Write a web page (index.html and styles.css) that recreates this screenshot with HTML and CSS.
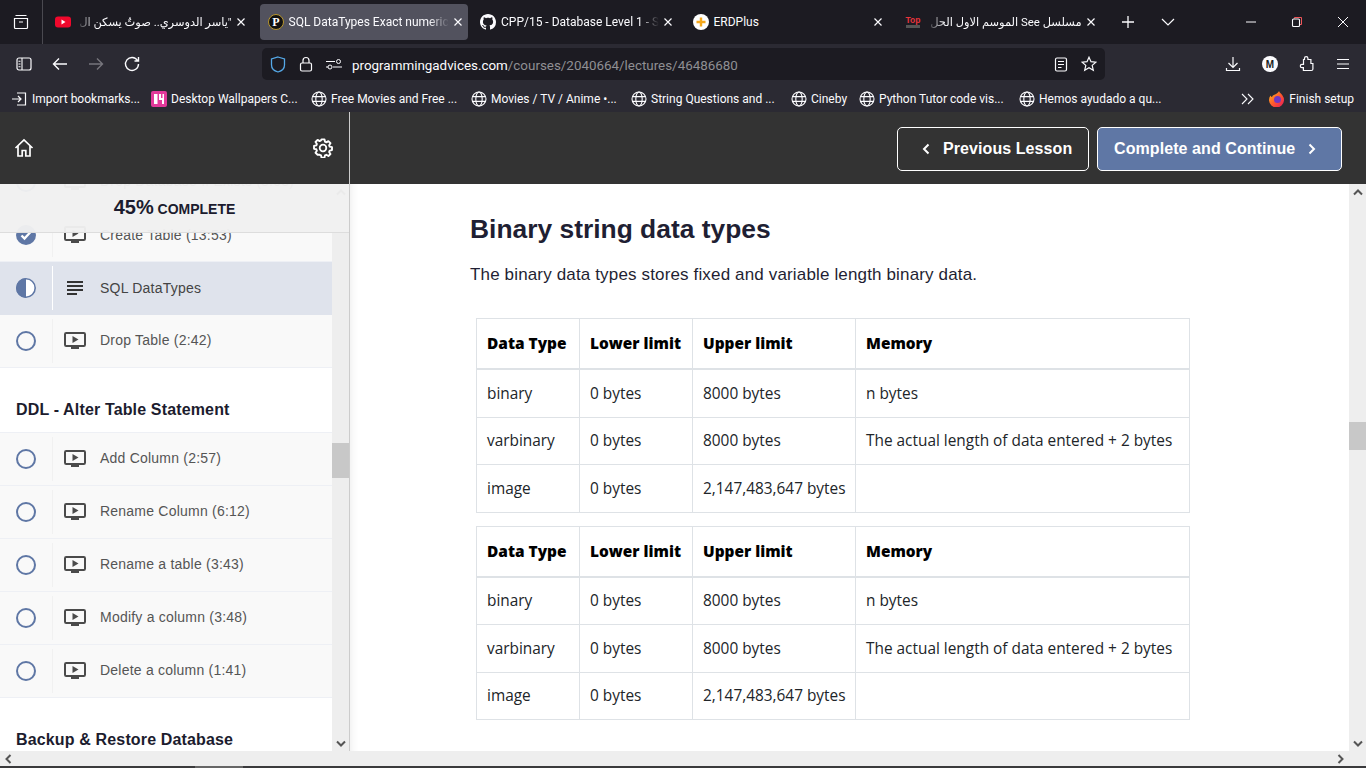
FILE: index.html
```html
<!DOCTYPE html>
<html lang="en">

<head>
    <meta charset="UTF-8">
    <title>SQL DataTypes</title>
    <link rel="stylesheet" href="styles.css">
</head>

<body>
    <svg class="defs" width="0" height="0">
        <symbol id="globe" viewBox="0 0 16 16">
            <g fill="none" stroke="#fbfbfe" stroke-width="1.1">
                <circle cx="8" cy="8" r="7"/>
                <ellipse cx="8" cy="8" rx="3.2" ry="7"/>
                <path d="M1.4 5.6h13.2M1.4 10.4h13.2"/>
            </g>
        </symbol>
        <symbol id="close" viewBox="0 0 10 10">
            <path d="M1.5 1.5l7 7M8.5 1.5l-7 7" fill="none" stroke="#fbfbfe" stroke-width="1.2"/>
        </symbol>
        <symbol id="screen" viewBox="0 0 22 18">
            <rect x="1" y="1" width="20" height="13" rx="1.2" fill="none" stroke="#4b4b4b" stroke-width="2"/>
            <path d="M8.5 4l6 3.5-6 3.5z" fill="#4b4b4b"/>
            <rect x="7" y="15" width="8" height="2" fill="#4b4b4b"/>
        </symbol>
        <symbol id="chev" viewBox="0 0 12 8">
            <path d="M2 6.5l4-4 4 4" fill="none" stroke="#555" stroke-width="2"/>
        </symbol>
    </svg>

    <!--tab bar-->
    <header class="tabbar">
        <div class="tab-view">
            <svg width="16" height="16" viewBox="0 0 16 16">
                <path d="M2.5 1.500h11M1.500 4.500h13v9a1 1 0 0 1-1 1h-11a1 1 0 0 1-1-1zM6 8h4" fill="none" stroke="#fbfbfe" stroke-width="1.2"/>
            </svg>
        </div>
        <div class="tab">
            <svg class="fav" width="16" height="16" viewBox="0 0 16 16">
                <rect y="2.500" width="16" height="11" rx="3" fill="#f0082c"/>
                <path d="M6.500 5.500l4 2.500-4 2.500z" fill="#fff"/>
            </svg>
            <span class="tab-title tab-title-rtl" dir="rtl">"ياسر الدوسري.. صوتٌ يسكن ال</span>
            <svg class="tab-close"><use href="#close"/></svg>
        </div>
        <div class="tab tab-active">
            <svg class="fav" width="16" height="16" viewBox="0 0 16 16">
                <circle cx="8" cy="8" r="7.500" fill="#111" stroke="#b8962e"/>
                <text x="8" y="12" text-anchor="middle" class="fav-letter">P</text>
            </svg>
            <span class="tab-title">SQL DataTypes Exact numeric</span>
            <svg class="tab-close"><use href="#close"/></svg>
        </div>
        <div class="tab">
            <svg class="fav" width="16" height="16" viewBox="0 0 16 16">
                <path fill="#fbfbfe" d="M8 0C3.580 0 0 3.580 0 8c0 3.540 2.290 6.530 5.470 7.590.4.070.55-.170.55-.380 0-.190-.010-.820-.010-1.490-2.010.370-2.530-.490-2.690-.940-.090-.230-.480-.940-.820-1.130-.280-.150-.680-.520-.010-.530.630-.010 1.080.580 1.230.820.720 1.210 1.870.870 2.330.660.070-.520.280-.870.510-1.070-1.780-.200-3.640-.890-3.640-3.950 0-.870.310-1.590.820-2.150-.080-.200-.360-1.020.080-2.120 0 0 .670-.210 2.200.820.640-.180 1.320-.270 2-.270s1.360.090 2 .270c1.530-1.040 2.200-.820 2.200-.820.440 1.100.160 1.920.080 2.120.510.560.820 1.270.820 2.150 0 3.070-1.870 3.750-3.650 3.950.290.250.540.730.540 1.480 0 1.070-.010 1.930-.010 2.200 0 .210.150.460.550.380A8.010 8.010 0 0 0 16 8c0-4.420-3.580-8-8-8z"/>
            </svg>
            <span class="tab-title">CPP/15 - Database Level 1 - S</span>
            <svg class="tab-close"><use href="#close"/></svg>
        </div>
        <div class="tab">
            <svg class="fav" width="16" height="16" viewBox="0 0 16 16">
                <circle cx="8" cy="8" r="8" fill="#fff"/>
                <path d="M8 3.500v9M3.500 8h9" stroke="#f5a81c" stroke-width="2.400"/>
            </svg>
            <span class="tab-title">ERDPlus</span>
            <svg class="tab-close"><use href="#close"/></svg>
        </div>
        <div class="tab">
            <svg class="fav" width="16" height="16" viewBox="0 0 16 16">
                <text x="8" y="9" text-anchor="middle" class="fav-top">Top</text>
                <rect x="1" y="11" width="14" height="3" fill="#555"/>
            </svg>
            <span class="tab-title tab-title-rtl" dir="rtl">مسلسل See الموسم الاول الحل</span>
            <svg class="tab-close"><use href="#close"/></svg>
        </div>
        <div class="tab-new">
            <svg width="14" height="14" viewBox="0 0 14 14"><path d="M7 1v12M1 7h12" stroke="#fbfbfe" stroke-width="1.300"/></svg>
        </div>
        <div class="tab-list">
            <svg width="14" height="8" viewBox="0 0 14 8"><path d="M1 1l6 6 6-6" fill="none" stroke="#fbfbfe" stroke-width="1.200"/></svg>
        </div>
        <div class="win-btns">
            <svg width="12" height="12" viewBox="0 0 12 12"><path d="M1 6h10" stroke="#fbfbfe" stroke-width="1"/></svg>
            <svg width="12" height="12" viewBox="0 0 12 12">
                <path d="M3.500 2.500v-1h7v7h-1.500" fill="none" stroke="#f0565a" stroke-width="1"/>
                <rect x="1.500" y="3" width="7" height="7.500" rx="1" fill="none" stroke="#fbfbfe" stroke-width="1.100"/>
            </svg>
            <svg width="12" height="12" viewBox="0 0 12 12"><path d="M1 1l10 10M11 1L1 11" stroke="#fbfbfe" stroke-width="1"/></svg>
        </div>
    </header>

    <!--address bar-->
    <div class="toolbar">
        <div class="nav-btns">
            <svg width="16" height="14" viewBox="0 0 16 14">
                <rect x="1" y="1" width="14" height="12" rx="2" fill="none" stroke="#fbfbfe" stroke-width="1.200"/>
                <path d="M6 1v12M2.500 4.200h2M2.500 7h2M2.500 9.800h2" stroke="#fbfbfe" stroke-width="1.100"/>
            </svg>
            <svg width="16" height="14" viewBox="0 0 16 14"><path d="M15 7H2M7 1.500L1.500 7 7 12.500" fill="none" stroke="#fbfbfe" stroke-width="1.400"/></svg>
            <svg width="16" height="14" viewBox="0 0 16 14"><path d="M1 7h13M9 1.500L14.500 7 9 12.500" fill="none" stroke="#77767d" stroke-width="1.400"/></svg>
            <svg width="16" height="16" viewBox="0 0 16 16"><path d="M13.500 4.500A6.500 6.500 0 1 0 14.500 8M14.500 1v4h-4" fill="none" stroke="#fbfbfe" stroke-width="1.400"/></svg>
        </div>
        <div class="urlbar">
            <svg class="url-shield" width="16" height="17" viewBox="0 0 16 17">
                <path d="M8 1l6.500 2v6c0 3.500-3 6-6.500 7-3.500-1-6.500-3.500-6.500-7V3z" fill="none" stroke="#55a9e8" stroke-width="1.300"/>
            </svg>
            <svg class="url-lock" width="14" height="16" viewBox="0 0 14 16">
                <rect x="1.500" y="7" width="11" height="8" rx="1.500" fill="none" stroke="#fbfbfe" stroke-width="1.200"/>
                <path d="M4 7V4.500a3 3 0 0 1 6 0V7" fill="none" stroke="#fbfbfe" stroke-width="1.200"/>
            </svg>
            <svg class="url-perm" width="16" height="12" viewBox="0 0 16 12">
                <path d="M0 3.500h9M0 9h2M7 9h9" stroke="#fbfbfe" stroke-width="1"/>
                <circle cx="12.500" cy="3.500" r="2" fill="none" stroke="#fbfbfe"/>
                <circle cx="4" cy="9" r="2" fill="none" stroke="#fbfbfe"/>
            </svg>
            <span class="url-text">programmingadvices.com<span class="url-path">/courses/2040664/lectures/46486680</span></span>
            <svg width="14" height="15" viewBox="0 0 14 15">
                <rect x="1.500" y="1" width="11" height="13" rx="1.500" fill="none" stroke="#fbfbfe" stroke-width="1.200"/>
                <path d="M4 4.500h6M4 7.500h6M4 10.500h3.500" stroke="#fbfbfe" stroke-width="1.100"/>
            </svg>
            <svg class="url-star" width="16" height="16" viewBox="0 0 16 16">
                <path d="M8 1.200l2 4.500 4.900.5-3.700 3.200 1.100 4.800L8 11.700l-4.300 2.500 1.100-4.800L1.100 6.200 6 5.700z" fill="none" stroke="#fbfbfe" stroke-width="1.200"/>
            </svg>
        </div>
        <div class="tool-btns">
            <svg width="16" height="16" viewBox="0 0 16 16"><path d="M8 1v10M3.500 7L8 11.500 12.500 7M1.500 12v2.500h13V12" fill="none" stroke="#fbfbfe" stroke-width="1.200"/></svg>
            <svg width="16" height="16" viewBox="0 0 16 16">
                <circle cx="8" cy="8" r="8" fill="#fbfbfe"/>
                <text x="8" y="11.500" text-anchor="middle" class="avatar-letter">M</text>
            </svg>
            <svg width="16" height="16" viewBox="0 0 16 16">
                <path d="M5.500 3.500V2.300a1.700 1.700 0 0 1 3.400 0v1.200h3v4h2v5.500a1.500 1.500 0 0 1-1.500 1.500h-8v-2.800H3a1.700 1.700 0 0 1 0-3.400h1.500V3.500z" fill="none" stroke="#fbfbfe" stroke-width="1.200"/>
            </svg>
            <svg width="14" height="12" viewBox="0 0 14 12"><path d="M1 1.500h12M1 6h12M1 10.500h12" stroke="#fbfbfe" stroke-width="1.200"/></svg>
        </div>
    </div>

    <!--bookmarks-->
    <nav class="bookmarks">
        <div class="bm bm-import">
            <svg width="15" height="14" viewBox="0 0 15 14">
                <path d="M5 1h8.500v12H5M0 7h9M6 4l3 3-3 3" fill="none" stroke="#fbfbfe" stroke-width="1.200"/>
            </svg>
            <span>Import bookmarks...</span>
        </div>
        <div class="bm bm-wall">
            <svg width="16" height="16" viewBox="0 0 16 16">
                <rect width="16" height="16" rx="2" fill="#e2399a"/>
                <path d="M3 3h3.500v10H3zM8 3h2v4h1.500V3H13v10h-2V9H8z" fill="#fff"/>
            </svg>
            <span>Desktop Wallpapers C...</span>
        </div>
        <div class="bm"><svg class="bm-globe"><use href="#globe"/></svg><span>Free Movies and Free ...</span></div>
        <div class="bm"><svg class="bm-globe"><use href="#globe"/></svg><span>Movies / TV / Anime •...</span></div>
        <div class="bm"><svg class="bm-globe"><use href="#globe"/></svg><span>String Questions and ...</span></div>
        <div class="bm bm-short"><svg class="bm-globe"><use href="#globe"/></svg><span>Cineby</span></div>
        <div class="bm"><svg class="bm-globe"><use href="#globe"/></svg><span>Python Tutor code vis...</span></div>
        <div class="bm"><svg class="bm-globe"><use href="#globe"/></svg><span>Hemos ayudado a qu...</span></div>
        <svg class="bm-more" width="13" height="12" viewBox="0 0 13 12"><path d="M1 1l5 5-5 5M7 1l5 5-5 5" fill="none" stroke="#fbfbfe" stroke-width="1.100"/></svg>
        <div class="bm bm-setup">
            <svg width="16" height="16" viewBox="0 0 16 16">
                <defs>
                    <linearGradient id="fox" x1="0" y1="0" x2="1" y2="1">
                        <stop offset="0" stop-color="#ffc21a"/>
                        <stop offset=".5" stop-color="#ff5a2c"/>
                        <stop offset="1" stop-color="#e6175c"/>
                    </linearGradient>
                </defs>
                <path d="M10 0c.5 2 2.500 2.500 3.500 4.500A7.500 7.500 0 1 1 1.500 4.500C2 5.500 2.500 6 3 6c.5-2 3-2.500 4-3 1-.7 2.500-1.500 3-3z" fill="url(#fox)"/>
                <circle cx="8.500" cy="8.500" r="3.500" fill="#6f37c4"/>
            </svg>
            <span>Finish setup</span>
        </div>
    </nav>

    <!--course top bar-->
    <div class="course-head">
        <div class="head-left">
            <svg width="20" height="20" viewBox="0 0 20 20">
                <path d="M1.500 10L10 2l8.500 8M4 8v10h4.200v-5.500h3.600V18H16V8" fill="none" stroke="#fff" stroke-width="1.700"/>
            </svg>
            <svg width="20" height="20" viewBox="0 0 20 20">
                <path d="M8.300 1h3.400l.5 2.600 1.500.7 2.300-1.400 2.300 2.400-1.500 2.200.6 1.600 2.600.5v3.300l-2.600.5-.6 1.600 1.500 2.200-2.300 2.300-2.300-1.400-1.500.6-.5 2.600H8.300l-.5-2.600-1.500-.6L4 18.100l-2.300-2.300 1.500-2.200-.6-1.600L0 11.500V8.200l2.600-.5.6-1.600-1.500-2.200L4 1.500l2.300 1.400 1.500-.7z" transform="translate(1 .5) scale(.9)" fill="none" stroke="#fff" stroke-width="2.100" stroke-linejoin="round"/>
                <circle cx="10" cy="10" r="3.300" fill="none" stroke="#fff" stroke-width="1.800"/>
            </svg>
        </div>
        <div class="head-right">
            <a class="btn btn-prev">
                <svg width="8" height="12" viewBox="0 0 8 12"><path d="M6.500 1.500L2 6l4.500 4.500" fill="none" stroke="#fff" stroke-width="2"/></svg>
                Previous Lesson
            </a>
            <a class="btn btn-next">
                Complete and Continue
                <svg width="8" height="12" viewBox="0 0 8 12"><path d="M1.500 1.500L6 6l-4.500 4.500" fill="none" stroke="#fff" stroke-width="2"/></svg>
            </a>
        </div>
    </div>

    <div class="workspace">
        <!--sidebar-->
        <aside class="sidebar">
            <div class="curriculum">
                <ul class="lessons">
                    <li class="lesson">
                        <span class="status"><i class="dot"></i></span>
                        <svg class="lesson-ico"><use href="#screen"/></svg>
                        <span class="lesson-name">Drop Database If Exists (8:03)</span>
                    </li>
                    <li class="lesson lesson-done">
                        <span class="status">
                            <svg width="20" height="20" viewBox="0 0 20 20">
                                <circle cx="10" cy="10" r="10" fill="#5f77a5"/>
                                <path d="M5.500 10.500l3 3 6-6.500" fill="none" stroke="#fff" stroke-width="2.400"/>
                            </svg>
                        </span>
                        <svg class="lesson-ico"><use href="#screen"/></svg>
                        <span class="lesson-name">Create Table (13:53)</span>
                    </li>
                    <li class="lesson lesson-on">
                        <span class="status">
                            <svg width="20" height="20" viewBox="0 0 20 20">
                                <circle cx="10" cy="10" r="10" fill="#fff"/>
                                <path d="M10 0a10 10 0 0 0 0 20z" fill="#5f77a5"/>
                                <circle cx="10" cy="10" r="9.200" fill="none" stroke="#5f77a5" stroke-width="1.600"/>
                            </svg>
                        </span>
                        <svg class="lesson-ico" viewBox="0 0 22 18">
                            <path d="M3 3h16M3 7h16M3 11h16M3 15h10" stroke="#333" stroke-width="2"/>
                        </svg>
                        <span class="lesson-name">SQL DataTypes</span>
                    </li>
                    <li class="lesson">
                        <span class="status"><i class="dot"></i></span>
                        <svg class="lesson-ico"><use href="#screen"/></svg>
                        <span class="lesson-name">Drop Table (2:42)</span>
                    </li>
                </ul>
                <h3 class="section-title">DDL - Alter Table Statement</h3>
                <ul class="lessons">
                    <li class="lesson">
                        <span class="status"><i class="dot"></i></span>
                        <svg class="lesson-ico"><use href="#screen"/></svg>
                        <span class="lesson-name">Add Column (2:57)</span>
                    </li>
                    <li class="lesson">
                        <span class="status"><i class="dot"></i></span>
                        <svg class="lesson-ico"><use href="#screen"/></svg>
                        <span class="lesson-name">Rename Column (6:12)</span>
                    </li>
                    <li class="lesson">
                        <span class="status"><i class="dot"></i></span>
                        <svg class="lesson-ico"><use href="#screen"/></svg>
                        <span class="lesson-name">Rename a table (3:43)</span>
                    </li>
                    <li class="lesson">
                        <span class="status"><i class="dot"></i></span>
                        <svg class="lesson-ico"><use href="#screen"/></svg>
                        <span class="lesson-name">Modify a column (3:48)</span>
                    </li>
                    <li class="lesson">
                        <span class="status"><i class="dot"></i></span>
                        <svg class="lesson-ico"><use href="#screen"/></svg>
                        <span class="lesson-name">Delete a column (1:41)</span>
                    </li>
                </ul>
                <h3 class="section-title">Backup &amp; Restore Database</h3>
            </div>
            <div class="vscroll">
                <svg class="sb-arrow"><use href="#chev"/></svg>
                <div class="thumb thumb-side"></div>
                <svg class="sb-arrow sb-arrow-down"><use href="#chev"/></svg>
            </div>
            <div class="progress"><b>45%</b> COMPLETE</div>
        </aside>

        <!--lecture content-->
        <main class="lecture">
            <div class="lecture-body">
                <h2 class="lecture-title">Binary string data types</h2>
                <p class="lecture-text">The binary data types stores fixed and variable length binary data.</p>
                <table class="types">
                    <thead>
                        <tr><th class="c1">Data Type</th><th class="c2">Lower limit</th><th class="c3">Upper limit</th><th>Memory</th></tr>
                    </thead>
                    <tbody>
                        <tr><td>binary</td><td>0 bytes</td><td>8000 bytes</td><td>n bytes</td></tr>
                        <tr><td>varbinary</td><td>0 bytes</td><td>8000 bytes</td><td>The actual length of data entered + 2 bytes</td></tr>
                        <tr><td>image</td><td>0 bytes</td><td>2,147,483,647 bytes</td><td></td></tr>
                    </tbody>
                </table>
                <table class="types">
                    <thead>
                        <tr><th class="c1">Data Type</th><th class="c2">Lower limit</th><th class="c3">Upper limit</th><th>Memory</th></tr>
                    </thead>
                    <tbody>
                        <tr><td>binary</td><td>0 bytes</td><td>8000 bytes</td><td>n bytes</td></tr>
                        <tr><td>varbinary</td><td>0 bytes</td><td>8000 bytes</td><td>The actual length of data entered + 2 bytes</td></tr>
                        <tr><td>image</td><td>0 bytes</td><td>2,147,483,647 bytes</td><td></td></tr>
                    </tbody>
                </table>
            </div>
            <div class="vscroll">
                <svg class="sb-arrow"><use href="#chev"/></svg>
                <div class="thumb thumb-main"></div>
                <svg class="sb-arrow sb-arrow-down"><use href="#chev"/></svg>
            </div>
        </main>
    </div>

    <!--bottom scrollbar-->
    <div class="hscroll">
        <svg class="sb-arrow sb-arrow-left"><use href="#chev"/></svg>
        <svg class="sb-arrow sb-arrow-right"><use href="#chev"/></svg>
    </div>
    <div class="desk-edge"><i></i></div>
</body>

</html>
```

FILE: styles.css
```css
html,
body,
h2,
h3,
p,
ul {
    margin: 0;
    padding: 0;
}

body {
    display: flex;
    flex-direction: column;
    height: 768px;
    overflow: hidden;
    background: #fff;
    font-family: "Liberation Sans", Arial, sans-serif;
}

svg {
    display: block;
    flex: none;
}

.defs {
    position: absolute;
}

/*tab bar*/
.tabbar {
    display: flex;
    align-items: center;
    flex: none;
    height: 44px;
    background: #1c1b22;
    color: #fbfbfe;
    font: 12px Roboto, "DejaVu Sans", sans-serif;
}

.tab-view {
    display: flex;
    align-items: center;
    justify-content: center;
    width: 43px;
    height: 44px;
    box-sizing: border-box;
    border-right: 1px solid #4a4950;
}

.tab {
    display: flex;
    align-items: center;
    width: 208.500px;
    height: 36px;
    margin-right: 4px;
    padding: 0 10px 0 8px;
    box-sizing: border-box;
    border-radius: 4px;
}

.tab:nth-child(2) {
    margin-left: 4px;
}

.tab-active {
    background: #52525e;
}

.fav {
    margin-right: 5px;
}

.fav-letter {
    fill: #fff;
    font: bold 12px "Liberation Serif", serif;
}

.fav-top {
    fill: #e8343c;
    font: bold 8.500px "Liberation Sans", sans-serif;
}

.avatar-letter {
    fill: #1c1b22;
    font: bold 10px "Liberation Sans", sans-serif;
}

.tab-title {
    flex: 1;
    white-space: nowrap;
    -webkit-mask-image: linear-gradient(to left, transparent 0, #000 20px);
    mask-image: linear-gradient(to left, transparent 0, #000 20px);
}

.tab-title-rtl {
    font-size: 11.400px;
    -webkit-mask-image: linear-gradient(to right, transparent 0, #000 20px);
    mask-image: linear-gradient(to right, transparent 0, #000 20px);
}

/*ERDPlus is short, nothing to fade*/
.tab:nth-child(5) .tab-title {
    -webkit-mask-image: none;
    mask-image: none;
}

.tab-close {
    width: 10px;
    height: 10px;
    margin-left: 4px;
}

.tab-new {
    margin-left: 11px;
}

.tab-list {
    margin-left: 26px;
}

.win-btns {
    display: flex;
    gap: 34px;
    margin-left: auto;
    padding-right: 17px;
}

/*address bar*/
.toolbar {
    display: flex;
    align-items: center;
    flex: none;
    height: 40px;
    background: #2b2a33;
}

.nav-btns {
    display: flex;
    align-items: center;
    gap: 20px;
    width: 262px;
    padding-left: 16px;
    box-sizing: border-box;
}

.urlbar {
    display: flex;
    align-items: center;
    width: 843px;
    height: 32px;
    padding: 0 8px;
    box-sizing: border-box;
    border-radius: 5px;
    background: #1c1b22;
}

.url-lock {
    margin-left: 13px;
}

.url-perm {
    margin-left: 13px;
}

.url-text {
    flex: 1;
    margin-left: 10px;
    padding-top: 2px;
    color: #fbfbfe;
    font: 13.400px Roboto, sans-serif;
}

.url-path {
    color: #8f8f93;
}

.url-star {
    margin-left: 13px;
}

.tool-btns {
    display: flex;
    align-items: center;
    gap: 21px;
    margin-left: 120px;
}

/*bookmarks*/
.bookmarks {
    display: flex;
    align-items: center;
    flex: none;
    height: 28px;
    padding: 1px 12px 0;
    box-sizing: border-box;
    background: #2b2a33;
    color: #fbfbfe;
    font: 12px Roboto, sans-serif;
}

.bm {
    display: flex;
    align-items: center;
    gap: 4px;
    width: 160px;
    white-space: nowrap;
}

.bm-import {
    width: 139px;
    gap: 5px;
}

.bm-short {
    width: 68px;
}

.bm-globe {
    width: 16px;
    height: 16px;
}

.bm-more {
    margin-left: auto;
}

.bm-setup {
    width: auto;
    margin-left: 15px;
}

/*course top bar*/
.course-head {
    display: flex;
    flex: none;
    height: 72px;
    background: #333;
}

.head-left {
    display: flex;
    align-items: center;
    justify-content: space-between;
    width: 350px;
    padding: 0 16px 0 14px;
    box-sizing: border-box;
    border-right: 1px solid #ccc;
}

.head-right {
    display: flex;
    align-items: center;
    justify-content: flex-end;
    flex: 1;
    gap: 8px;
    padding: 1px 24px 0 0;
}

.btn {
    display: flex;
    align-items: center;
    height: 44px;
    box-sizing: border-box;
    border: 1px solid #fff;
    border-radius: 5px;
    color: #fff;
    font-size: 16px;
    font-weight: bold;
    letter-spacing: .08px;
}

.btn-prev {
    gap: 13px;
    width: 192px;
    padding-left: 24px;
}

.btn-next {
    gap: 13px;
    width: 245px;
    padding-left: 16px;
    background: #5f77a5;
}

/*body*/
.workspace {
    display: flex;
    flex: none;
    height: 567px;
}

.sidebar {
    position: relative;
    display: flex;
    flex: none;
    width: 350px;
    box-sizing: border-box;
    border-right: 1px solid #ccc;
    overflow: hidden;
}

.curriculum {
    flex: 1;
    margin-top: -28px;
    background: #fff;
}

.lessons {
    list-style: none;
}

.lesson {
    display: flex;
    align-items: center;
    height: 53px;
    box-sizing: border-box;
    border-bottom: 1px solid #eef0f5;
    background: #f9f9f9;
    color: #555;
    font-size: 14px;
    letter-spacing: .22px;
}

.lesson-on {
    background: #dfe3ec;
    border-bottom-color: #dfe3ec;
    color: #444;
}

.lesson-name {
    margin-bottom: 2px;
}

.lesson-on .lesson-name,
.lesson-done .lesson-name {
    margin-bottom: 0;
}

.status {
    display: flex;
    align-items: center;
    justify-content: center;
    width: 53px;
    height: 44px;
    box-sizing: border-box;
    border-right: 1px solid #f1f1f1;
}

.lesson-on .status {
    border-right-color: #fff;
}

.dot {
    display: block;
    width: 20px;
    height: 20px;
    box-sizing: border-box;
    border: 2px solid #5f77a5;
    border-radius: 50%;
}

.lesson-ico {
    width: 22px;
    height: 18px;
    margin: 0 14px 0 11px;
}

.section-title {
    height: 65px;
    padding: 32px 16px 0;
    box-sizing: border-box;
    border-bottom: 1px solid #eef0f5;
    background: #fff;
    color: #1c1c2e;
    font-size: 16px;
    line-height: 19px;
    letter-spacing: .15px;
}

.section-title:last-child {
    border-bottom: 0;
}

.progress {
    position: absolute;
    top: 0;
    left: 0;
    width: 349px;
    height: 49px;
    box-sizing: border-box;
    border-bottom: 1px solid #ddd;
    background: rgba(240, 240, 240, .96);
    color: #1c1c2e;
    text-align: center;
    font-size: 14px;
    font-weight: bold;
    line-height: 47px;
}

.progress b {
    font-size: 20px;
}

/*scrollbars*/
.vscroll {
    display: flex;
    flex-direction: column;
    flex: none;
    width: 17px;
    background: #eee;
}

.sb-arrow {
    width: 12px;
    height: 8px;
    margin: 4px 2.500px 3px;
}

.sb-arrow-down {
    margin-top: auto;
    transform: rotate(180deg);
}

.thumb {
    height: 35px;
    background: #c8c8c8;
}

.thumb-side {
    margin-top: 244px;
}

.thumb-main {
    height: 28px;
    margin-top: 223px;
}

.hscroll {
    display: flex;
    align-items: center;
    justify-content: space-between;
    flex: none;
    height: 15px;
    background: #eee;
}

.hscroll .sb-arrow {
    margin: 0 2px;
}

.sb-arrow-left {
    transform: rotate(-90deg);
}

.sb-arrow-right {
    transform: rotate(90deg);
    margin-right: 19px !important;
}

.desk-edge {
    flex: 1;
    background: #3a3a3c;
}

.desk-edge i {
    display: block;
    width: 48px;
    height: 100%;
    margin-left: 195px;
    background: #666;
}

/*lecture*/
.lecture {
    display: flex;
    flex: 1;
    background: #fff;
}

.lecture-body {
    flex: 1;
    padding: 30px 0 0 120px;
    overflow: hidden;
    box-shadow: inset 10px 0 10px -10px rgba(0, 0, 0, .1);
}

.lecture-title {
    color: #1f1f33;
    font-size: 26.400px;
    line-height: 30px;
}

.lecture-text {
    margin-top: 21px;
    color: #1f1f33;
    font-size: 17px;
    line-height: 20px;
    letter-spacing: .15px;
}

.types {
    width: 714px;
    margin: 0 0 13px 6px;
    border-collapse: collapse;
    table-layout: fixed;
    color: #212529;
    font: 15.400px "Open Sans", sans-serif;
}

.lecture-text + .types {
    margin-top: 33px;
}

.types th,
.types td {
    padding: 0 10px;
    border: 1px solid #dee2e6;
    text-align: left;
    white-space: nowrap;
}

.types th {
    height: 49px;
    border-bottom-width: 2px;
    color: #000;
    font-weight: 800;
}

.types td {
    height: 46.500px;
}

.c1 {
    width: 82px;
}

.c2 {
    width: 92px;
}

.c3 {
    width: 142px;
}
```
